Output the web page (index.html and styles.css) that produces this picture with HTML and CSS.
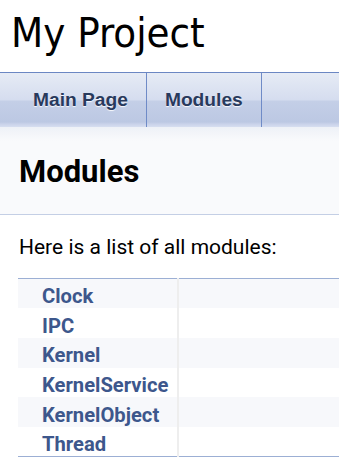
FILE: index.html
```html
<!DOCTYPE html>
<html lang="en">
<head>
<meta charset="UTF-8">
<title>My Project: Modules</title>
<link rel="stylesheet" href="styles.css">
</head>
<body>
<div class="titlearea">
  <div class="projectname">My Project</div>
</div>

<div class="navrow">
  <ul class="tablist">
    <li><a href="#">Main Page</a></li>
    <li><a href="#">Modules</a></li>
  </ul>
</div>

<div class="header">
  <div class="title">Modules</div>
</div>

<div class="contents">
  <div class="textblock">Here is a list of all modules:</div>
  <table class="directory">
    <tr class="even"><td class="entry"><a class="el" href="#">Clock</a></td><td class="desc"></td></tr>
    <tr><td class="entry"><a class="el" href="#">IPC</a></td><td class="desc"></td></tr>
    <tr class="even"><td class="entry"><a class="el" href="#">Kernel</a></td><td class="desc"></td></tr>
    <tr><td class="entry"><a class="el" href="#">KernelService</a></td><td class="desc"></td></tr>
    <tr class="even"><td class="entry"><a class="el" href="#">KernelObject</a></td><td class="desc"></td></tr>
    <tr><td class="entry"><a class="el" href="#">Thread</a></td><td class="desc"></td></tr>
  </table>
</div>
</body>
</html>
```
FILE: styles.css
```css
body {
  margin: 0;
  background: #fff;
  color: #000;
  font: 400 21px Roboto, "Liberation Sans", sans-serif;
  overflow: hidden;
}

/* title */
.titlearea {height: 72px; padding-left: 11px; box-sizing: border-box;}
.projectname {font: 41.5px "DejaVu Sans Condensed", "DejaVu Sans", sans-serif; font-stretch: condensed; line-height: 64px; padding-top: 1px;}

/* tabs */
.navrow {
  height: 55px;
  box-sizing: border-box;
  border-top: 1px solid #6B87C3;
  background: linear-gradient(to bottom, #E6EBF5 0px, #D5DDEF 27px, #C4CFE7 28px, #BCC8E3 49px, #C9D2EA 51px, #D7DEF0 54px);
}
.tablist {list-style: none; margin: 0; padding: 0 0 0 15px; display: flex; height: 100%;}
.tablist li {border-right: 1px solid #6F8BC7; display: flex;}
.tablist a {
  display: block;
  padding: 0 18px 0 18px;
  font: bold 19.2px/54px "Liberation Sans", Arial, sans-serif;
  color: #283A5D;
  text-decoration: none;
  text-shadow: 0 1px 1px rgba(255,255,255,0.9);
}

/* page header */
.header {
  height: 88px;
  box-sizing: border-box;
  background: linear-gradient(to bottom, #EEF1F7 0px, #F9FAFC 14px);
  border-bottom: 1px solid #C4CFE5;
  padding: 0 19px;
  display: flex;
  align-items: center;
}
.title {font: bold 31px Roboto, sans-serif; margin-top: 2px;}

.contents {padding: 0 0 0 18px;}
.textblock {padding: 20px 0 0 1px; line-height: 24px; height: 43px;}

table.directory {border-collapse: collapse; width: 100%; border-top: 1px solid #9CAFD4; border-bottom: 1px solid #9CAFD4;}
.directory tr.even {background: #F7F8FB;}
.directory td {padding: 5px 0 0 0; height: 29.7px; box-sizing: border-box; vertical-align: middle;}
.directory td.entry {width: 160px; padding-left: 24px; white-space: nowrap;}
.directory td.desc {border-left: 2px solid #EEEEEE;}
.directory a.el {font: bold 20.2px/1 Roboto, sans-serif; color: #3D578C; text-decoration: none;}
```
